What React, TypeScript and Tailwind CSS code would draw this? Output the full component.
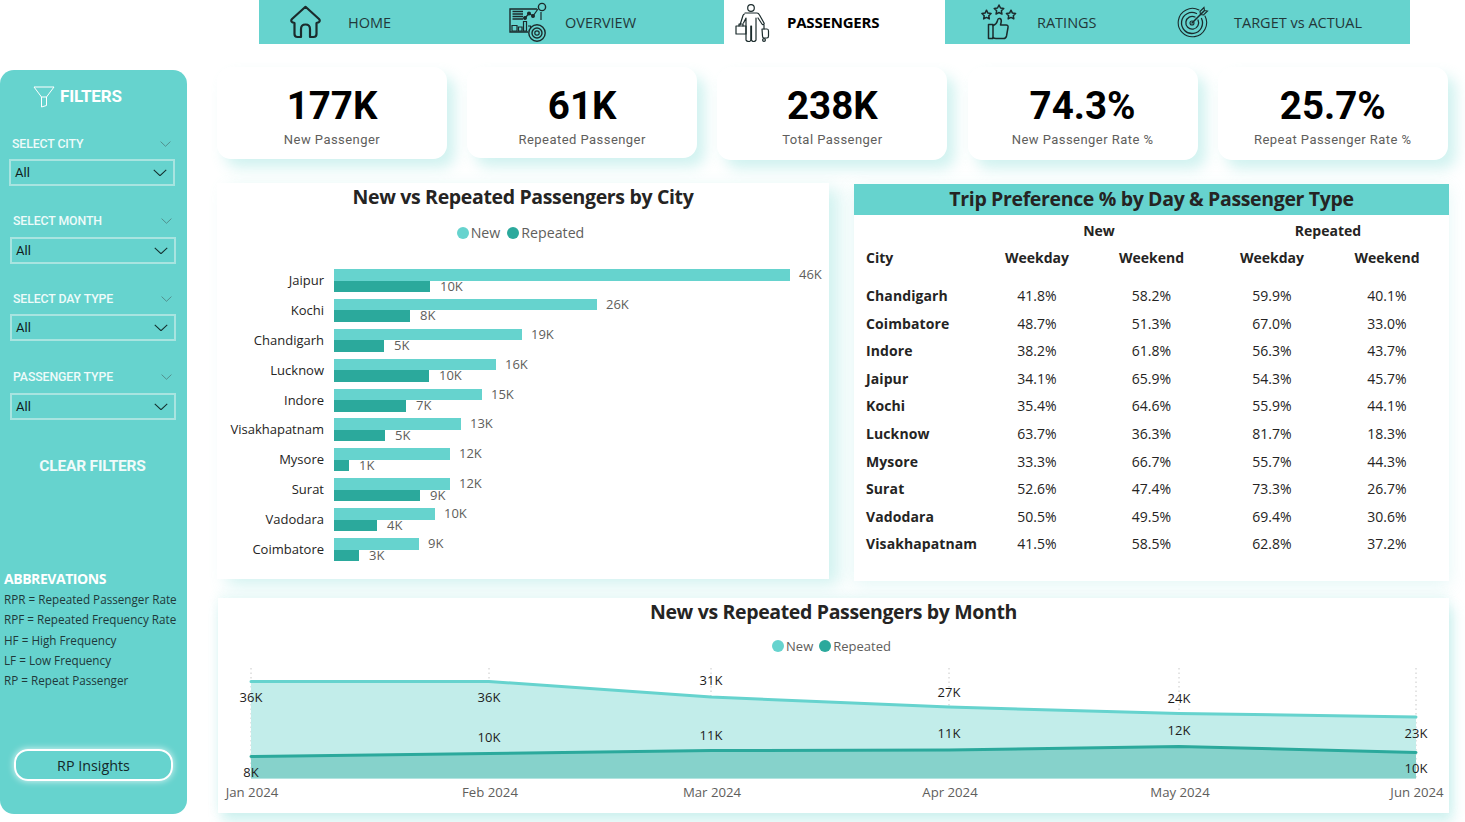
import React from "react";

const cityBars: [string, number, string, number, string][] = [
  ["Jaipur", 456, "46K", 96, "10K"],
  ["Kochi", 263, "26K", 76, "8K"],
  ["Chandigarh", 188, "19K", 50, "5K"],
  ["Lucknow", 162, "16K", 95, "10K"],
  ["Indore", 148, "15K", 72, "7K"],
  ["Visakhapatnam", 127, "13K", 51, "5K"],
  ["Mysore", 116, "12K", 15, "1K"],
  ["Surat", 116, "12K", 86, "9K"],
  ["Vadodara", 101, "10K", 43, "4K"],
  ["Coimbatore", 85, "9K", 25, "3K"],
];

const trips = [
  ["Chandigarh", "41.8%", "58.2%", "59.9%", "40.1%"],
  ["Coimbatore", "48.7%", "51.3%", "67.0%", "33.0%"],
  ["Indore", "38.2%", "61.8%", "56.3%", "43.7%"],
  ["Jaipur", "34.1%", "65.9%", "54.3%", "45.7%"],
  ["Kochi", "35.4%", "64.6%", "55.9%", "44.1%"],
  ["Lucknow", "63.7%", "36.3%", "81.7%", "18.3%"],
  ["Mysore", "33.3%", "66.7%", "55.7%", "44.3%"],
  ["Surat", "52.6%", "47.4%", "73.3%", "26.7%"],
  ["Vadodara", "50.5%", "49.5%", "69.4%", "30.6%"],
  ["Visakhapatnam", "41.5%", "58.5%", "62.8%", "37.2%"],
];

const kpis = [
  ["177K", "New Passenger", "h-[92px]"],
  ["61K", "Repeated Passenger", "h-[91px]"],
  ["238K", "Total Passenger", "h-[93px]"],
  ["74.3%", "New Passenger Rate %", "h-[93px]"],
  ["25.7%", "Repeat Passenger Rate %", "h-[93px]"],
];

const filters = [
  { label: "SELECT CITY", cls: "mt-[28px] ml-0", box: "mt-[7px]" },
  { label: "SELECT MONTH", cls: "mt-[27px] ml-px", box: "mt-[8px]" },
  { label: "SELECT DAY TYPE", cls: "mt-[27px] ml-px", box: "mt-[7px]" },
  { label: "PASSENGER TYPE", cls: "mt-[28px] ml-px", box: "mt-[8px]" },
];

const abbreviations = [
  "RPR = Repeated Passenger Rate",
  "RPF = Repeated Frequency Rate",
  "HF = High Frequency",
  "LF = Low Frequency",
  "RP = Repeat Passenger",
];

const ink = "#1b2b2c";

function HomeIcon() {
  return (
    <svg width="33" height="34" viewBox="0 0 33 34" fill="none" stroke={ink} strokeWidth="2.2" strokeLinejoin="round" strokeLinecap="round">
      <path d="M5.5 18 L3.2 17.2 Q1.4 15.8 3 14 L16.5 1.8 L30 14 Q31.6 15.8 29.8 17.2 L27.5 18 V29 Q27.5 32 24.5 32 H21 V24 Q21 19.5 16.5 19.5 Q12 19.5 12 24 V32 H8.5 Q5.5 32 5.5 29 Z" />
    </svg>
  );
}

function OverviewIcon() {
  return (
    <svg width="40" height="40" viewBox="0 0 40 40" fill="none" stroke={ink} strokeWidth="1.2">
      <path d="M28 7 H1 V30 H19" strokeWidth="1.4" />
      <path d="M32 10 V18" />
      <path d="M3.5 9.5 H14 M3.5 12 H14 M3.5 14.5 H14 M3.5 17 H14" strokeWidth="1.3" />
      <path d="M3 23.5 H8 V29 H3 Z M9.5 25 H13 V29 H9.5 Z M14.5 19.5 H17.5 V29 H14.5 Z M19 24 H21.5 V27" />
      <path d="M16 16 L20 11.5 L24 14 L29 7" />
      <circle cx="16" cy="16" r="1.4" fill={ink} />
      <circle cx="20" cy="11.5" r="1.4" fill={ink} />
      <circle cx="24" cy="14" r="1.4" fill={ink} />
      <circle cx="33" cy="5" r="3.6" strokeWidth="1.4" />
      <circle cx="28" cy="31" r="8.2" strokeWidth="1.4" />
      <circle cx="28" cy="31" r="5" strokeWidth="1.4" />
      <circle cx="28" cy="31" r="2.2" />
    </svg>
  );
}

function PassengerIcon() {
  return (
    <svg width="36" height="40" viewBox="0 0 36 40" fill="none" stroke={ink} strokeWidth="1.2" strokeLinejoin="round" strokeLinecap="round">
      <circle cx="16" cy="6" r="3.3" />
      <path d="M11 38 V16 L8.5 21 M21 38 V16 M11 38 Q11.5 39.5 14 39.5 Q15.5 39.5 15.8 38 V24 H16.5 V38 Q17 39.5 18.5 39.5 Q20.5 39.5 21 38" />
      <path d="M10 11 H22 Q23.5 11 24.5 13 L29 21 Q29.5 22 28.5 22.5 Q27.5 23 27 22 L23 16" />
      <path d="M9.5 12 Q8.5 12 8 13.5 L5 23" />
      <path d="M1 24 H11 V32 H1 Z" />
      <path d="M4 24 V22 H8 V24" />
      <path d="M27 27 H32 Q33.5 27 33.5 29 V34 Q33.5 36 32 36 H29 Q27.5 36 27.5 34 Z" />
      <path d="M29 27 V23" />
      <circle cx="29" cy="38" r="1.4" />
    </svg>
  );
}

function Star({ x, y, r }: { x: number; y: number; r: number }) {
  const pts = Array.from({ length: 10 }, (_, i) => {
    const a = -Math.PI / 2 + (i * Math.PI) / 5;
    const d = i % 2 === 0 ? r : r * 0.5;
    return `${(x + d * Math.cos(a)).toFixed(2)},${(y + d * Math.sin(a)).toFixed(2)}`;
  }).join(" ");
  return <polygon points={pts} />;
}

function RatingsIcon() {
  return (
    <svg width="36" height="36" viewBox="0 0 36 36" fill="none" stroke={ink} strokeWidth="1.5" strokeLinejoin="round" strokeLinecap="round">
      <Star x={5.5} y={11} r={4.8} />
      <Star x={18} y={6} r={5} />
      <Star x={30} y={11} r={4.8} />
      <path d="M7.5 20.5 H12 V34.5 H7.5 Z" />
      <path d="M12 21.5 Q15.5 20.5 16.5 16.5 Q17 14 19 14.5 Q21 15.5 20 19 L19.5 21 H25 Q27.5 21 27 23.5 L25.5 32 Q25 34.5 22.5 34.5 H15 Q13 34.5 12 33.5" />
    </svg>
  );
}

function TargetIcon() {
  return (
    <svg width="32" height="32" viewBox="0 0 32 32" fill="none" stroke={ink} strokeWidth="1.1" strokeLinecap="round">
      <path d="M22 4 A14.2 14.2 0 1 0 28 10" />
      <path d="M19.5 7.5 A10.5 10.5 0 1 0 24.5 12.5" strokeWidth="1.3" />
      <path d="M18 11 A6.4 6.4 0 1 0 21 14" strokeWidth="1.3" />
      <circle cx="15" cy="17" r="2" />
      <path d="M15 17 L27 5" strokeWidth="1.5" />
      <path d="M23 5.5 L27 1.5 L27.5 4.5 L30.5 5 L26.5 9 L23.5 8.5 Z" fill="none" />
    </svg>
  );
}

function Funnel() {
  return (
    <svg width="22" height="22" viewBox="0 0 22 22" fill="none" stroke="#ffffff" strokeWidth="1" strokeLinejoin="round">
      <path d="M1 1 H21 L13.5 11 V19.5 L8.5 21 V11 Z" />
      <path d="M8.5 11 H13.5" />
    </svg>
  );
}

function Chevron({ width, color, strokeWidth }: { width: number; color: string; strokeWidth: number }) {
  return (
    <svg width={width} height={width * 0.55} viewBox="0 0 14 8" fill="none" stroke={color} strokeWidth={strokeWidth}>
      <path d="M0.5 0.8 L7 7 L13.5 0.8" />
    </svg>
  );
}

function Legend({ size }: { size: "lg" | "sm" }) {
  const lg = size === "lg";
  return (
    <div className={lg ? "flex items-center justify-center pr-[5px] text-[14.2px] leading-[20px] text-[#605e5c]" : "flex items-center justify-center pr-[4px] text-[13px] leading-[18px] text-[#605e5c]"}>
      <span className="h-[12px] w-[12px] rounded-full bg-[#66d3ce]" />
      <span className="ml-[2px]">New</span>
      <span className={lg ? "ml-[7px] h-[12px] w-[12px] rounded-full bg-[#2ba99c]" : "ml-[6px] h-[12px] w-[12px] rounded-full bg-[#2ba99c]"} />
      <span className="ml-[2px]">Repeated</span>
    </div>
  );
}

function CityChart() {
  return (
    <div className="h-[396px] w-[612px] bg-white shadow-[10px_6px_16px_rgba(102,211,206,0.3)]">
      <div className="text-center text-[19.5px] font-bold leading-[28px] text-[#252423] tracking-[-0.35px]">New vs Repeated Passengers by City</div>
      <div className="mt-[12px]"><Legend size="lg" /></div>
      <div className="mt-[26px] flex flex-col gap-[6.9px]">
        {cityBars.map(([city, n, nl, r, rl]) => (
          <div key={city} className="flex">
            <div className="w-[107px] pt-[1px] text-right text-[13px] leading-[20px] text-[#252423]">{city}</div>
            <div className="ml-[10px] flex flex-col">
              <div className="flex h-[11.5px] items-center">
                <div className="h-full bg-[#66d3ce]" style={{ width: n }} />
                <span className="ml-[9px] text-[13px] text-[#605e5c]">{nl}</span>
              </div>
              <div className="flex h-[11.5px] items-center">
                <div className="h-full bg-[#2ba99c]" style={{ width: r }} />
                <span className="ml-[10px] text-[13px] text-[#605e5c]">{rl}</span>
              </div>
            </div>
          </div>
        ))}
      </div>
    </div>
  );
}

function TripTable() {
  const grid = "grid grid-cols-[114px_114px_115px_126px_104px] pl-[12px]";
  return (
    <div className="mt-px h-[397px] w-[595px] bg-white shadow-[0_4px_16px_rgba(102,211,206,0.18)]">
      <div className="flex h-[31px] items-center justify-center bg-[#66d3ce] pb-[2px] text-[19.5px] font-bold tracking-[-0.35px] text-[#252423]">Trip Preference % by Day &amp; Passenger Type</div>
      <div className={`${grid} mt-[5px] h-[20px] items-center text-[14px] font-bold text-[#252423]`}>
        <span />
        <span className="col-span-2 pl-[9px] text-center">New</span>
        <span className="col-span-2 pl-[8px] text-center">Repeated</span>
      </div>
      <div className={`${grid} mt-[7px] h-[20px] items-center text-[14px] font-bold text-[#252423]`}>
        <span>City</span>
        <span className="text-center">Weekday</span>
        <span className="text-center">Weekend</span>
        <span className="text-center">Weekday</span>
        <span className="text-center">Weekend</span>
      </div>
      <div className="mt-[15px] flex flex-col">
        {trips.map((t) => (
          <div key={t[0]} className={`${grid} h-[27.55px] items-center text-[14px] text-[#252423]`}>
            <span className="whitespace-nowrap font-bold tracking-[0.1px]">{t[0]}</span>
            {t.slice(1).map((v, i) => (
              <span key={i} className="text-center">{v}</span>
            ))}
          </div>
        ))}
      </div>
    </div>
  );
}

const months = [
  { x: 33, label: "Jan 2024" },
  { x: 271, label: "Feb 2024" },
  { x: 493, label: "Mar 2024" },
  { x: 731, label: "Apr 2024" },
  { x: 961, label: "May 2024" },
  { x: 1198, label: "Jun 2024" },
];
const newY = [16.5, 16.5, 32, 42, 48.5, 52];
const repY = [91.5, 88.5, 85.5, 85, 81.5, 87.5];
const newLabels: [number, number, string][] = [[33, 37, "36K"], [271, 37, "36K"], [493, 20, "31K"], [731, 32, "27K"], [961, 38, "24K"], [1198, 73, "23K"]];
const repLabels: [number, number, string][] = [[33, 112, "8K"], [271, 77, "10K"], [493, 75, "11K"], [731, 73, "11K"], [961, 70, "12K"], [1198, 108, "10K"]];
const base = 113.5;

function line(ys: number[]) {
  return months.map((m, i) => `${i === 0 ? "M" : "L"}${m.x} ${ys[i]}`).join(" ");
}

function MonthChart() {
  return (
    <div className="ml-px h-[215px] w-[1231px] bg-white shadow-[4px_10px_12px_rgba(102,211,206,0.28),0_-3px_10px_rgba(102,211,206,0.14)]">
      <div className="text-center text-[19.5px] font-bold leading-[28px] tracking-[-0.35px] text-[#252423]">New vs Repeated Passengers by Month</div>
      <div className="mt-[11px]"><Legend size="sm" /></div>
      <svg width="1231" height="136" viewBox="0 0 1231 136" className="mt-[10px] block" fontFamily="'Open Sans', sans-serif">
        {months.map((m) => (
          <line key={m.x} x1={m.x} x2={m.x} y1="3" y2="115" stroke="#c8c8c8" strokeWidth="1" strokeDasharray="1.5 3" />
        ))}
        <path d={`${line(newY)} L1198 ${base} L33 ${base} Z`} fill="#c2edea" />
        <path d={`${line(repY)} L1198 ${base} L33 ${base} Z`} fill="#86d2cb" />
        <path d={line(newY)} fill="none" stroke="#66d3ce" strokeWidth="3" strokeLinecap="round" />
        <path d={line(repY)} fill="none" stroke="#2ba99c" strokeWidth="3" strokeLinecap="round" />
        {[...newLabels, ...repLabels].map(([x, y, t], i) => (
          <text key={i} x={x} y={y} textAnchor="middle" fontSize="13" fill="#1c1c1c">{t}</text>
        ))}
        {months.map((m) => (
          <text key={m.label} x={m.x + 1} y="132" textAnchor="middle" fontSize="13.2" fill="#605e5c">{m.label}</text>
        ))}
      </svg>
    </div>
  );
}

function Sidebar() {
  return (
    <aside className="mt-[26px] flex h-[744px] w-[187px] shrink-0 flex-col rounded-[14px] bg-[#66d3ce]">
      <div className="ml-[33px] mt-[16px] flex h-[22px] items-center">
        <Funnel />
        <span className="ml-[5px] font-['Roboto',sans-serif] text-[17px] font-bold tracking-[-0.2px] text-white">FILTERS</span>
      </div>
      {filters.map((f) => (
        <div key={f.label} className={`${f.cls} flex flex-col pl-[9px]`}>
          <div className="flex h-[16px] w-[165px] items-center justify-between pl-[3px] pr-[3px]">
            <span className="font-['Roboto',sans-serif] text-[12.3px] font-medium tracking-[-0.1px] text-[#eefbfa]">{f.label}</span>
            <Chevron width={11} color="#4f8a88" strokeWidth={1.2} />
          </div>
          <div className={`${f.box} flex h-[27px] w-[166px] items-center justify-between border-2 border-[#a8e4e0] pl-[4px] pr-[6px]`}>
            <span className="font-['Roboto',sans-serif] text-[13px] text-[#101c1c]">All</span>
            <Chevron width={14} color="#14302f" strokeWidth={1.1} />
          </div>
        </div>
      ))}
      <div className="mt-[35px] pr-[2px] text-center font-['Roboto',sans-serif] text-[15.5px] font-bold tracking-[-0.2px] text-[#f0fbfa]">CLEAR FILTERS</div>
      <div className="ml-[4px] mt-[91px] text-[14px] font-bold leading-[20px] tracking-[-0.45px] text-white">ABBREVATIONS</div>
      <div className="ml-[4px] flex flex-col text-[11.7px] leading-[20.2px] text-[#20393a]">
        {abbreviations.map((a) => (
          <span key={a}>{a}</span>
        ))}
      </div>
      <div className="ml-[14px] mt-[59px] flex h-[32px] w-[159px] items-center justify-center rounded-[14px] border-2 border-white text-[14.3px] text-[#14292a] shadow-[0_0_7px_rgba(255,255,255,0.8)]">RP Insights</div>
    </aside>
  );
}

function Nav() {
  const text = "mt-[2px] text-[14.5px] text-[#23383a]";
  return (
    <nav className="ml-[259px] flex h-[44px] w-[1151px] items-center bg-[#66d3ce]">
      <div className="flex h-full w-[250px] items-center pl-[30px]">
        <HomeIcon />
        <span className={`ml-[26px] ${text}`}>HOME</span>
      </div>
      <div className="flex h-full w-[215px] items-center">
        <OverviewIcon />
        <span className={`ml-[16px] ${text}`}>OVERVIEW</span>
      </div>
      <div className="flex h-full w-[221px] items-center bg-white pl-[11px]">
        <PassengerIcon />
        <span className="ml-[16px] text-[15px] font-bold tracking-[-0.2px] text-black">PASSENGERS</span>
      </div>
      <div className="flex h-full w-[232px] items-center pl-[36px]">
        <RatingsIcon />
        <span className={`ml-[20px] ${text}`}>RATINGS</span>
      </div>
      <div className="flex h-full items-center">
        <TargetIcon />
        <span className={`ml-[25px] ${text}`}>TARGET vs ACTUAL</span>
      </div>
    </nav>
  );
}

export default function App() {
  return (
    <div className="h-[822px] w-[1465px] overflow-hidden bg-white font-['Open_Sans',sans-serif]">
      <Nav />
      <div className="flex items-start">
        <Sidebar />
        <main className="ml-[30px] mt-[23px] flex w-[1232px] flex-col">
          <div className="flex items-start gap-[20.2px]">
            {kpis.map(([value, label, h]) => (
              <div key={label} className={`${h} flex w-[230px] flex-col items-center rounded-[14px] bg-white pt-[16px] shadow-[8px_9px_14px_rgba(102,211,206,0.3)]`}>
                <div className="font-['Roboto',sans-serif] text-[38.5px] font-bold leading-[46px] text-black">{value}</div>
                <div className="mt-px font-['Roboto',sans-serif] text-[13px] tracking-[0.45px] text-[#605e5c]">{label}</div>
              </div>
            ))}
          </div>
          <div className="mt-[23px] flex items-start gap-[25px]">
            <CityChart />
            <TripTable />
          </div>
          <div className="mt-[17px]">
            <MonthChart />
          </div>
        </main>
      </div>
    </div>
  );
}
